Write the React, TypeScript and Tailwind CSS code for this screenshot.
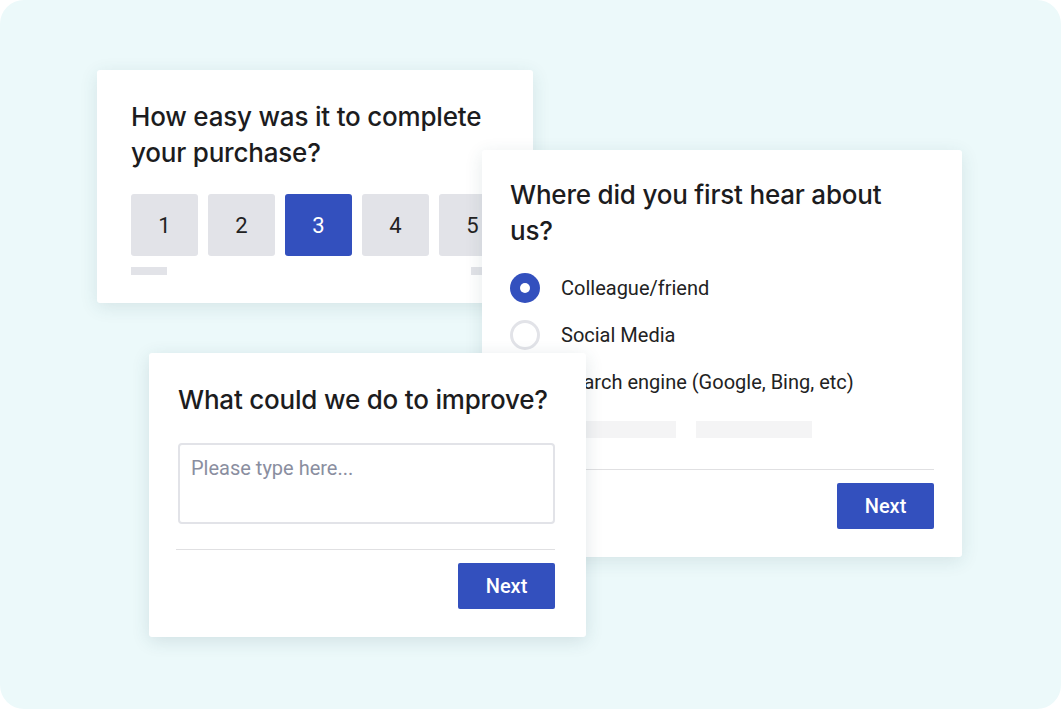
import React from "react";

const heading = "font-['Inter',sans-serif] font-medium text-[26px] leading-[36px] tracking-[-0.2px] text-[#1c1c1e]";
const body = "font-['Roboto',sans-serif]";

function NextButton() {
  return (
    <button className={`${body} h-[46px] w-[97px] rounded-[2px] bg-[#3350be] text-[20px] font-medium text-white`}>
      Next
    </button>
  );
}

function RatingCard() {
  const options = [1, 2, 3, 4, 5];
  return (
    <div className="absolute left-[97px] top-[70px] h-[233px] w-[436px] overflow-hidden rounded-[3px] bg-white pl-[34px] pt-[29px] shadow-[0_4px_18px_rgba(40,80,90,0.12)]">
      <h2 className={heading}>
        How easy was it to complete
        <br />
        your purchase?
      </h2>
      <div className="mt-[23px] flex gap-[10px]">
        {options.map((n) => (
          <div
            key={n}
            className={`${body} flex h-[62px] w-[67px] shrink-0 items-center justify-center rounded-[3px] text-[22px] ${
              n === 3 ? "bg-[#3350be] text-white" : "bg-[#e2e3e8] text-[#222]"
            }`}
          >
            {n}
          </div>
        ))}
      </div>
      <div className="mt-[11px] flex">
        <div className="h-[8px] w-[36px] shrink-0 bg-[#e2e3e8]" />
        <div className="ml-[304px] h-[8px] w-[60px] shrink-0 bg-[#e2e3e8]" />
      </div>
    </div>
  );
}

function SourceCard() {
  const items = ["Colleague/friend", "Social Media", "Search engine (Google, Bing, etc)"];
  return (
    <div className="absolute left-[482px] top-[150px] flex h-[407px] w-[480px] flex-col rounded-[3px] bg-white px-[28px] pt-[27px] shadow-[0_4px_18px_rgba(40,80,90,0.12)]">
      <h2 className={heading}>
        Where did you first hear about
        <br />
        us?
      </h2>
      <div className="mt-[24px] flex flex-col gap-[17px]">
        {items.map((label, i) => (
          <div key={label} className="flex h-[30px] items-center gap-[21px]">
            {i === 0 ? (
              <span className="flex h-[30px] w-[30px] items-center justify-center rounded-full bg-[#3350be]">
                <span className="h-[10px] w-[10px] rounded-full bg-white" />
              </span>
            ) : (
              <span className="h-[30px] w-[30px] rounded-full border-[3px] border-[#e2e3e8] bg-white" />
            )}
            <span className={`${body} text-[20px] text-[#222]`}>{label}</span>
          </div>
        ))}
      </div>
      <div className="ml-[51px] mt-[24px] flex gap-[20px]">
        <div className="h-[17px] w-[115px] bg-[#f4f4f5]" />
        <div className="h-[17px] w-[116px] bg-[#f4f4f5]" />
      </div>
      <div className="mt-[31px] border-t border-[#e0e0e2]" />
      <div className="mt-[13px] flex justify-end">
        <NextButton />
      </div>
    </div>
  );
}

function ImproveCard() {
  return (
    <div className="absolute left-[149px] top-[353px] flex h-[284px] w-[437px] flex-col rounded-[3px] bg-white pl-[29px] pr-[31px] pt-[29px] shadow-[0_4px_18px_rgba(40,80,90,0.14)]">
      <h2 className={heading}>What could we do to improve?</h2>
      <div
        className={`${body} mt-[25px] h-[81px] w-[377px] rounded-[4px] border-2 border-[#e2e3e8] px-[11px] pt-[8px] text-[20px] text-[#8a8ea0]`}
      >
        Please type here...
      </div>
      <div className="ml-[-2px] mt-[25px] border-t border-[#e0e0e2]" />
      <div className="mt-[13px] flex justify-end">
        <NextButton />
      </div>
    </div>
  );
}

export default function App() {
  return (
    <div className="h-[709px] w-[1061px] bg-white">
      <div className="relative h-[709px] w-[1061px] overflow-hidden rounded-[24px] bg-[#ecf9fa]">
        <RatingCard />
        <SourceCard />
        <ImproveCard />
      </div>
    </div>
  );
}
